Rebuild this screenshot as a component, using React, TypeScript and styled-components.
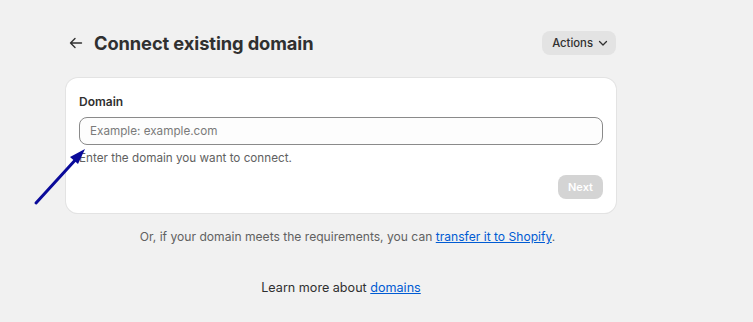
import styled, { createGlobalStyle } from "styled-components";

const GlobalStyle = createGlobalStyle`
  html, body {
    margin: 0;
    padding: 0;
    background: #f1f1f1;
    font-family: Inter, "Noto Sans", sans-serif;
    color: #303030;
  }
`;

const Page = styled.div`
  position: relative;
  width: 753px;
  height: 322px;
  overflow: hidden;
`;

const Column = styled.div`
  width: 550px;
  margin-left: 66px;
  padding-top: 31px;
  display: flex;
  flex-direction: column;
`;

const Header = styled.header`
  display: flex;
  align-items: center;
  justify-content: space-between;
  height: 24px;
`;

const TitleRow = styled.div`
  display: flex;
  align-items: center;
  gap: 8px;
`;

const BackButton = styled.button`
  border: 0;
  background: none;
  padding: 0;
  width: 20px;
  height: 20px;
  display: flex;
  align-items: center;
  justify-content: center;
  color: #303030;
`;

const Title = styled.h1`
  margin: 0;
  font-size: 18.3px;
  font-weight: 700;
  letter-spacing: -0.1px;
  color: #303030;
`;

const ActionsButton = styled.button`
  display: flex;
  align-items: center;
  gap: 4px;
  height: 24px;
  padding: 0 7px 0 10px;
  border: 0;
  border-radius: 8px;
  background: #e3e3e3;
  font-family: inherit;
  font-size: 11.3px;
  font-weight: 450;
  color: #303030;
`;

const Card = styled.section`
  margin-top: 23px;
  background: #fff;
  border-radius: 12px;
  box-shadow: 0 0 0 1px #e3e3e3, 0 1px 0 rgba(0, 0, 0, 0.07);
  padding: 13px 13px 14px 13px;
  display: flex;
  flex-direction: column;
`;

const Label = styled.label`
  font-size: 12px;
  font-weight: 600;
  color: #303030;
  line-height: 20px;
  margin-top: 1px;
`;

const Input = styled.input`
  margin-top: 5px;
  height: 28px;
  box-sizing: border-box;
  border: 1px solid #8a8a8a;
  border-radius: 8px;
  background: #fdfdfd;
  padding: 0 10px;
  font-family: inherit;
  font-size: 11.7px;
  color: #303030;
  &::placeholder {
    color: #7a7a7a;
  }
`;

const Help = styled.p`
  margin: 4px 0 0;
  font-size: 11.7px;
  line-height: 18px;
  color: #616161;
`;

const Footer = styled.div`
  display: flex;
  justify-content: flex-end;
  margin-top: 8px;
`;

const NextButton = styled.button`
  height: 24px;
  width: 45px;
  padding: 0;
  border: 0;
  border-radius: 8px;
  background: #d4d4d4;
  color: #fff;
  font-family: inherit;
  font-size: 11px;
  font-weight: 600;
`;

const Note = styled.p<{ $dark?: boolean }>`
  margin: 0;
  text-align: center;
  font-size: ${(p) => (p.$dark ? "12.6px" : "12.1px")};
  padding-left: ${(p) => (p.$dark ? "0" : "13px")};
  line-height: 18px;
  color: ${(p) => (p.$dark ? "#303030" : "#616161")};
`;

const NoteGap = styled.div<{ $h: number }>`
  height: ${(p) => p.$h}px;
`;

const Link = styled.a`
  color: #005bd3;
  text-decoration: underline;
`;

const Annotation = styled.svg`
  position: absolute;
  left: 0;
  top: 0;
  pointer-events: none;
`;

export default function App() {
  return (
    <Page>
      <GlobalStyle />
      <Column>
        <Header>
          <TitleRow>
            <BackButton aria-label="Back">
              <svg width="14" height="14" viewBox="0 0 14 14" fill="none">
                <path
                  d="M12.5 7H1.5M6 2.5L1.5 7L6 11.5"
                  stroke="#303030"
                  strokeWidth="1.4"
                  strokeLinecap="round"
                  strokeLinejoin="round"
                />
              </svg>
            </BackButton>
            <Title>Connect existing domain</Title>
          </TitleRow>
          <ActionsButton>
            Actions
            <svg width="12" height="12" viewBox="0 0 12 12" fill="none">
              <path
                d="M2.5 4.5L6 8l3.5-3.5"
                stroke="#303030"
                strokeWidth="1.3"
                strokeLinecap="round"
                strokeLinejoin="round"
              />
            </svg>
          </ActionsButton>
        </Header>

        <Card>
          <Label htmlFor="domain">Domain</Label>
          <Input id="domain" placeholder="Example: example.com" />
          <Help>Enter the domain you want to connect.</Help>
          <Footer>
            <NextButton disabled>Next</NextButton>
          </Footer>
        </Card>

        <NoteGap $h={15} />
        <Note>
          Or, if your domain meets the requirements, you can{" "}
          <Link href="#">transfer it to Shopify</Link>.
        </Note>
        <NoteGap $h={33} />
        <Note $dark>
          Learn more about <Link href="#">domains</Link>
        </Note>
      </Column>

      <Annotation width="753" height="322">
        <line
          x1="36"
          y1="203"
          x2="78"
          y2="157"
          stroke="#0a0a9a"
          strokeWidth="3"
          strokeLinecap="round"
        />
        <polygon points="85,149 70,157 78,164" fill="#0a0a9a" />
      </Annotation>
    </Page>
  );
}
